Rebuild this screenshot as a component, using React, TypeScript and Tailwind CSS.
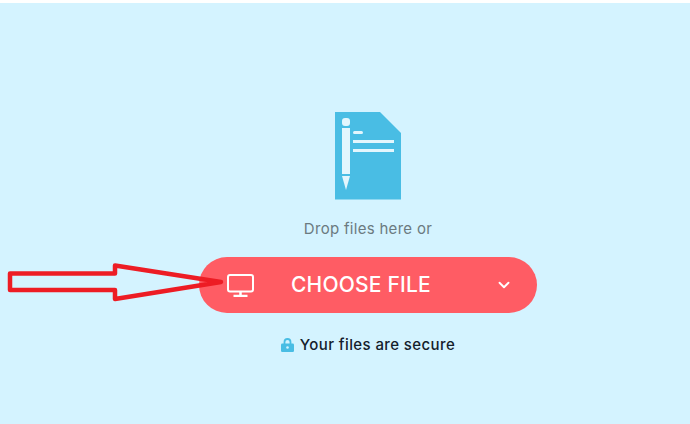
import { ChevronDown } from "lucide-react";

const font = { fontFamily: "Inter, 'Noto Sans', sans-serif" };

function FileIcon() {
  return (
    <svg width="66" height="88" viewBox="0 0 66 88" className="block">
      <path d="M0 0H45L66 21V87.500H0Z" fill="#49bde4" />
      <rect x="7" y="6" width="8" height="8" rx="3" fill="#e3f6fd" />
      <rect x="7" y="16" width="8" height="46" fill="#e3f6fd" />
      <path d="M7 64H15L11 78Z" fill="#e3f6fd" />
      <rect x="18" y="19" width="10" height="3" rx="1.500" fill="#e3f6fd" />
      <rect x="18" y="28" width="41" height="3" fill="#e3f6fd" />
      <rect x="18" y="37" width="41" height="3" fill="#e3f6fd" />
    </svg>
  );
}

function MonitorIcon() {
  return (
    <svg width="27" height="23" viewBox="0 0 27 23" fill="none" stroke="white" strokeWidth="2" className="block">
      <rect x="1" y="1" width="25" height="16.500" rx="2" />
      <path d="M13.500 18V21M6.500 22H20.500" strokeWidth="2.500" />
    </svg>
  );
}

function LockIcon() {
  return (
    <svg width="13" height="14" viewBox="0 0 13 14" className="block">
      <path d="M3.500 7V4a3 3 0 0 1 6 0V7" fill="none" stroke="#49bde4" strokeWidth="1.800" />
      <rect x="0" y="5.500" width="13" height="8.500" rx="1.200" fill="#49bde4" />
      <circle cx="6.500" cy="9.500" r="1.300" fill="#d4f3ff" />
    </svg>
  );
}

export default function App() {
  return (
    <div className="relative h-[424px] w-[690px] overflow-hidden bg-white pt-[3px]" style={font}>
      <div className="flex h-[421px] flex-col items-center bg-[#d4f3ff] pl-[46px] pt-[109px]">
        <div className="ml-[-1px]">
          <FileIcon />
        </div>
        <p className="mt-[19px] text-[15px] leading-[20px] tracking-[0.3px] text-[#6b7a80]">Drop files here or</p>
        <button className="mt-[18px] flex h-[56px] w-[338px] items-center rounded-full bg-[#ff5c64] pl-[28px] pr-[24px] text-white">
          <MonitorIcon />
          <span className="ml-[37px] text-[21px] font-medium tracking-[0.2px]">CHOOSE FILE</span>
          <ChevronDown size={18} strokeWidth={2.5} className="ml-auto" />
        </button>
        <div className="mt-[22px] flex items-center gap-[6px] text-[15px] font-medium leading-[20px] tracking-[0.4px] text-[#14202b]">
          <LockIcon />
          <span>Your files are secure</span>
        </div>
      </div>
      {/* red annotation arrow drawn over the page */}
      <svg width="240" height="50" viewBox="0 0 240 50" className="absolute left-0 top-[258px]" fill="none">
        <path
          d="M10 15.500H115V7.500L221 24L115 41V32H10Z"
          stroke="#ed1c24"
          strokeWidth="4.500"
          strokeLinejoin="round"
        />
      </svg>
    </div>
  );
}
